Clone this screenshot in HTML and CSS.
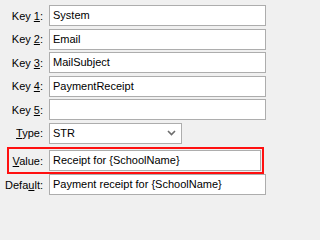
FILE: index.html
```html
<!DOCTYPE html>
<html>
<head>
<meta charset="utf-8">
<link rel="stylesheet" href="styles.css">
</head>
<body>
<div class="form">
  <div class="row"><div class="label">Key <u>1</u>:</div><div class="field">System</div></div>
  <div class="row"><div class="label">Key <u>2</u>:</div><div class="field">Email</div></div>
  <div class="row"><div class="label">Key <u>3</u>:</div><div class="field">MailSubject</div></div>
  <div class="row"><div class="label">Key <u>4</u>:</div><div class="field">PaymentReceipt</div></div>
  <div class="row"><div class="label">Key <u>5</u>:</div><div class="field"></div></div>
  <div class="row"><div class="label"><u>T</u>ype:</div><div class="field select">STR<svg class="chev" width="9" height="6" viewBox="0 0 9 6"><path d="M1 1 L4.5 4.5 L8 1" fill="none" stroke="#6d6d6d" stroke-width="1.6"/></svg></div></div>
  <div class="row highlight"><div class="label"><u>V</u>alue:</div><div class="field">Receipt for {SchoolName}</div></div>
  <div class="row"><div class="label">Defa<u>u</u>lt:</div><div class="field">Payment receipt for {SchoolName}</div></div>
</div>
</body>
</html>
```
FILE: styles.css
```css
html, body {
  margin: 0;
  padding: 0;
  background: #f0f0f0;
}
body {
  font-family: "Liberation Sans", Arial, sans-serif;
  font-size: 11px;
  color: #000;
}
.form {
  display: flex;
  flex-direction: column;
  padding: 5px 5px 0 0;
  width: 271px;
  box-sizing: border-box;
}
.row {
  display: flex;
  align-items: center;
  height: 21px;
  margin-bottom: 2.5px;
}
.label {
  width: 49px;
  flex: none;
  text-align: right;
  padding-right: 6px;
  box-sizing: border-box;
  white-space: nowrap;
}
.label u {
  text-underline-offset: 1px;
}
.field {
  flex: 1;
  height: 21px;
  box-sizing: border-box;
  border: 1px solid #adadad;
  background: #fff;
  padding: 0 3px;
  line-height: 19px;
  white-space: nowrap;
  overflow: hidden;
}
.select {
  flex: none;
  width: 133px;
  display: flex;
  align-items: center;
  justify-content: space-between;
  padding-right: 5px;
}
.chev {
  display: block;
}
.highlight {
  height: 21px;
  border: 2px solid #ff1010;
  padding: 1px;
  margin: 1px 2px 0 7px;
  box-sizing: content-box;
}
.highlight .label {
  width: 39px;
}
```
